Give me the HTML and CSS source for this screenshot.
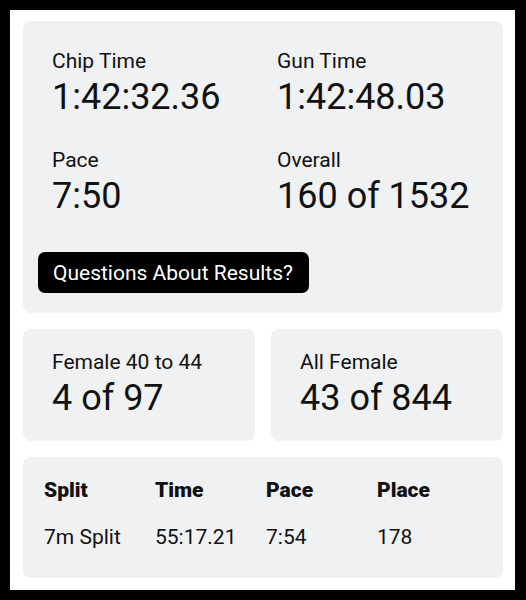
FILE: index.html
```html
<!DOCTYPE html>
<html lang="en">

<head>
  <meta charset="UTF-8" />
  <meta name="viewport" content="width=device-width, initial-scale=1.0" />
  <title>Results</title>
  <link rel="stylesheet" href="styles.css">
</head>

<body>
  <div class="page">
    <div class="card summary">
      <div class="stats">
        <div class="stat">
          <div class="label">Chip Time</div>
          <div class="value">1:42:32.36</div>
        </div>
        <div class="stat">
          <div class="label">Gun Time</div>
          <div class="value">1:42:48.03</div>
        </div>
        <div class="stat">
          <div class="label">Pace</div>
          <div class="value">7:50</div>
        </div>
        <div class="stat">
          <div class="label">Overall</div>
          <div class="value">160 of 1532</div>
        </div>
      </div>
      <button class="questions-btn">Questions About Results?</button>
    </div>

    <div class="places">
      <div class="card place">
        <div class="label">Female 40 to 44</div>
        <div class="value">4 of 97</div>
      </div>
      <div class="card place">
        <div class="label">All Female</div>
        <div class="value">43 of 844</div>
      </div>
    </div>

    <div class="card splits">
      <div class="split-head">Split</div>
      <div class="split-head">Time</div>
      <div class="split-head">Pace</div>
      <div class="split-head">Place</div>
      <div>7m Split</div>
      <div>55:17.21</div>
      <div>7:54</div>
      <div>178</div>
    </div>
  </div>
</body>

</html>
```

FILE: styles.css
```css
* {
  box-sizing: border-box;
}

body {
  margin: 0;
  height: 600px;
  overflow: hidden;
  background: #000;
  font-family: Roboto, 'Liberation Sans', sans-serif;
  color: #111;
}

.page {
  margin: 10px 11px 10px 10px;
  height: 580px;
  background: #fff;
  padding: 11px 12px 0 13px;
  display: flex;
  flex-direction: column;
  gap: 16px;
}

.card {
  background: #f0f1f3;
  border-radius: 8px;
}

.label {
  font-size: 21px;
  line-height: 24px;
}

.value {
  font-size: 36px;
  line-height: 49px;
}

.summary {
  padding: 15px 15px 20px;
}

.stats {
  display: grid;
  grid-template-columns: 1fr 1fr;
}

.stat {
  padding: 13px 14px;
}

.questions-btn {
  margin-top: 18px;
  background: #000;
  color: #fff;
  border: none;
  border-radius: 7px;
  font-family: inherit;
  font-size: 21px;
  line-height: 24px;
  padding: 9px 16px 8px 15px;
  cursor: pointer;
}

.places {
  display: grid;
  grid-template-columns: 1fr 1fr;
  gap: 16px;
}

.place {
  padding: 21px 29px 18px;
}

.splits {
  display: grid;
  grid-template-columns: repeat(4, 111px);
  row-gap: 23px;
  padding: 21px 21px 29px;
  font-size: 21px;
  line-height: 24px;
}

.split-head {
  font-weight: 900;
}
```
